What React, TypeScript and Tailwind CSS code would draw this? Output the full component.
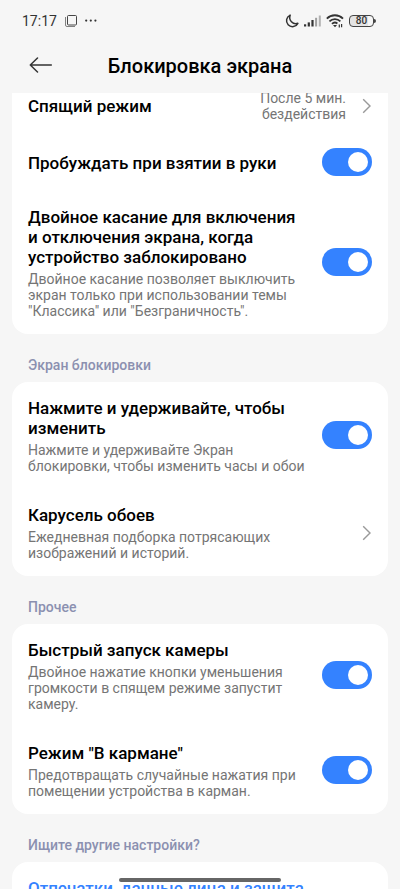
import React, { useId, useState } from 'react';

const StatusBar: React.FC = () => (
  <div className="flex h-10 items-center justify-between pt-[2px] pr-6 pl-[22px] text-[#333]">
    <div className="flex items-center gap-2">
      <span className="text-sm leading-5">17:17</span>
      <svg width="12" height="12" viewBox="0 0 12 12" fill="none" stroke="currentColor" aria-hidden="true">
        <rect x="2.5" y="0.5" width="9" height="9.5" rx="1" strokeOpacity="0.9" />
        <path d="M0.5 2v8a1.5 1.5 0 0 0 1.5 1.5h8" strokeOpacity="0.6" />
      </svg>
      <svg width="12" height="12" viewBox="0 0 12 12" fill="currentColor" aria-hidden="true">
        <circle cx="1.2" cy="5.6" r="1.1" />
        <circle cx="5.8" cy="5.6" r="1.1" />
        <circle cx="10.4" cy="5.6" r="1.1" />
      </svg>
    </div>
    <div className="flex items-center gap-[5px]">
      {/* Do not disturb */}
      <svg width="14" height="14" viewBox="0 0 14 14" fill="none" stroke="currentColor" strokeWidth="1.5" strokeLinejoin="round" aria-hidden="true">
        <path d="M5.2 1.1A6 6 0 1 0 12.9 9.3A6.2 6.2 0 0 1 5.2 1.1Z" />
      </svg>
      {/* Mobile signal, 3 of 5 */}
      <svg width="17" height="12" viewBox="0 0 17 12" fill="currentColor" aria-hidden="true">
        <rect x="0" y="9.3" width="2.2" height="2.2" />
        <rect x="3.7" y="7.4" width="2.2" height="4.1" />
        <rect x="7.4" y="5" width="2.2" height="6.5" />
        <rect x="11.1" y="2.8" width="2" height="8.7" opacity="0.45" />
        <rect x="14.8" y="0.5" width="2" height="11" opacity="0.35" />
      </svg>
      <svg width="18" height="14" viewBox="0 0 18 14" fill="none" stroke="currentColor" strokeWidth="1.8" aria-hidden="true">
        <path d="M0.8 4.6a11.5 11.5 0 0 1 16.2 0" />
        <path d="M3.4 7.3a7.8 7.8 0 0 1 11 0" />
        <path d="M6 9.8a4.2 4.2 0 0 1 5.4-.3" />
        <path d="M7 11h4L9 13.3z" fill="currentColor" stroke="none" />
        <path d="M13.3 10.4v3.2M15.6 10v3.2" strokeWidth="1.2" />
      </svg>
      <div className="flex items-center">
        <div className="flex h-3 w-[25px] items-center justify-center rounded-[4px] border border-[#444] bg-linear-to-r from-[#e4e4e4] from-80% to-[#f6f6f6] to-80%">
          <span className="text-[10px] leading-[10px] font-medium">80</span>
        </div>
        <div className="h-1 w-0.5 rounded-r-sm bg-[#444]"></div>
      </div>
    </div>
  </div>
);

const Chevron: React.FC = () => (
  <svg className="shrink-0" width="10" height="16" viewBox="0 0 10 16" fill="none" stroke="#999" strokeWidth="1.4" aria-hidden="true">
    <path d="M1.2 1.3L8 8l-6.8 6.7" />
  </svg>
);

interface RowProps {
  title: string;
  description?: string;
}

const rowClass = 'flex min-h-[57px] w-full items-center justify-between gap-4 px-4 pt-4 pb-[15px] text-left';

const RowText: React.FC<RowProps> = ({ title, description }) => (
  <span className="flex flex-1 flex-col gap-1">
    <span className="text-[17px] leading-5 font-medium text-black">{title}</span>
    {description && <span className="text-sm leading-4 text-[#757575]">{description}</span>}
  </span>
);

const ToggleRow: React.FC<RowProps> = ({ title, description }) => {
  const [enabled, setEnabled] = useState(true);
  const id = useId();

  return (
    <div className={rowClass}>
      <label htmlFor={id} className="flex flex-1">
        <RowText title={title} description={description} />
      </label>
      <span className="relative -mt-1.5 -mb-1 h-7 w-[50px] shrink-0">
        <input
          id={id}
          type="checkbox"
          role="switch"
          checked={enabled}
          onChange={(e) => setEnabled(e.target.checked)}
          className="peer block h-full w-full cursor-pointer appearance-none rounded-full bg-[#ddd] checked:bg-[#3482ff]"
        />
        <span className="pointer-events-none absolute top-1 left-1 size-5 rounded-full bg-white transition-all peer-checked:left-[26px]"></span>
      </span>
    </div>
  );
};

const LinkRow: React.FC<RowProps & { value?: string }> = ({ title, description, value }) => (
  <button type="button" className={rowClass}>
    <RowText title={title} description={description} />
    {value && <span className="-my-2 w-24 text-right text-sm leading-4 text-[#757575]">{value}</span>}
    <Chevron />
  </button>
);

const Section: React.FC<{ label?: string; children: React.ReactNode }> = ({ label, children }) => (
  <section>
    {label && <h2 className="px-4 pt-[22px] pb-2 text-sm leading-[18px] font-medium text-[#8b90b0]">{label}</h2>}
    <div className="rounded-2xl bg-white">{children}</div>
  </section>
);

const App: React.FC = () => {
  return (
    <div className="relative flex h-screen flex-col overflow-hidden bg-[#f6f6f6] font-['Roboto','Noto_Sans',sans-serif]">
      <header className="z-10 h-[93px] shrink-0 bg-[#f6f6f6]">
        <StatusBar />
        <div className="grid grid-cols-[24px_1fr_24px] items-center px-7 pt-3">
          <button type="button" aria-label="Назад" className="flex size-7 items-center">
            <svg width="26" height="18" viewBox="0 0 26 18" fill="none" stroke="#333" strokeWidth="1.5" strokeLinecap="round" strokeLinejoin="round">
              <path d="M9.5 1L2.3 8l7.2 7M2.3 8h21" />
            </svg>
          </button>
          <h1 className="text-center text-xl leading-7 font-medium text-black">Блокировка экрана</h1>
        </div>
      </header>

      <main className="-mt-4 flex-1 overflow-hidden px-3">
        <Section>
          <LinkRow title="Спящий режим" value="После 5 мин. бездействия" />
          <ToggleRow title="Пробуждать при взятии в руки" />
          <ToggleRow
            title="Двойное касание для включения и отключения экрана, когда устройство заблокировано"
            description={'Двойное касание позволяет выключить экран только при использовании темы "Классика" или "Безграничность".'}
          />
        </Section>

        <Section label="Экран блокировки">
          <ToggleRow
            title="Нажмите и удерживайте, чтобы изменить"
            description="Нажмите и удерживайте Экран блокировки, чтобы изменить часы и обои"
          />
          <LinkRow title="Карусель обоев" description="Ежедневная подборка потрясающих изображений и историй." />
        </Section>

        <Section label="Прочее">
          <ToggleRow
            title="Быстрый запуск камеры"
            description="Двойное нажатие кнопки уменьшения громкости в спящем режиме запустит камеру."
          />
          <ToggleRow
            title={'Режим "В кармане"'}
            description="Предотвращать случайные нажатия при помещении устройства в карман."
          />
        </Section>

        <Section label="Ищите другие настройки?">
          <a href="#security" className="block px-4 pt-4 pb-[15px] text-[17px] leading-5 font-medium text-[#3482ff]">
            Отпечатки, данные лица и защита
          </a>
        </Section>
      </main>

      {/* Gesture bar */}
      <div className="absolute bottom-[7px] left-1/2 z-20 h-1 w-[162px] -translate-x-1/2 rounded-full bg-[#666]"></div>
    </div>
  );
};

export default App;
